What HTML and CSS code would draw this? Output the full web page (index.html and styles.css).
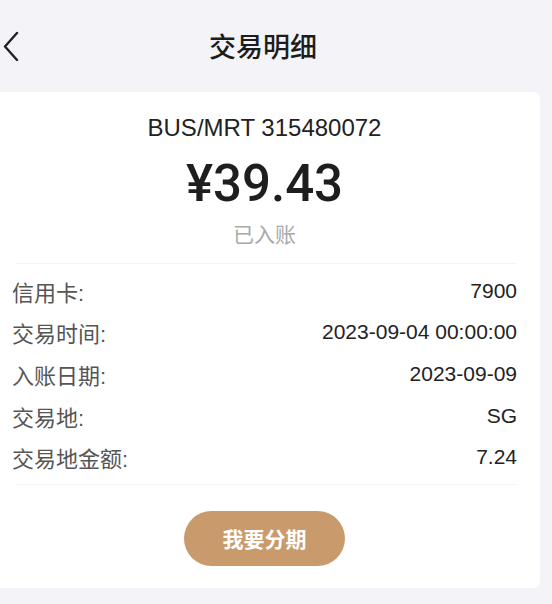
FILE: index.html
```html
<!DOCTYPE html>
<html lang="zh-CN">
<head>
    <meta charset="UTF-8">
    <meta name="viewport" content="width=device-width, initial-scale=1.0">
    <title>交易明细</title>
    <link rel="stylesheet" href="styles.css">
</head>
<body>
    <div class="header">
        <div class="back">
            <svg width="20" height="30" viewBox="0 0 20 30">
                <polyline points="16,2 4,15.5 16,29" fill="none" stroke="#222" stroke-width="2.4" stroke-linecap="round" stroke-linejoin="round"/>
            </svg>
        </div>
        <div class="title">交易明细</div>
        <div class="spacer"></div>
    </div>
    <div class="card">
        <div class="merchant">BUS/MRT 315480072</div>
        <div class="amount">¥39.43</div>
        <div class="status">已入账</div>
        <div class="divider"></div>
        <div class="rows">
            <div class="row"><span class="label">信用卡:</span><span class="value">7900</span></div>
            <div class="row"><span class="label">交易时间:</span><span class="value">2023-09-04 00:00:00</span></div>
            <div class="row"><span class="label">入账日期:</span><span class="value">2023-09-09</span></div>
            <div class="row"><span class="label">交易地:</span><span class="value">SG</span></div>
            <div class="row"><span class="label">交易地金额:</span><span class="value">7.24</span></div>
        </div>
        <div class="divider"></div>
        <div class="actions">
            <button class="btn">我要分期</button>
        </div>
    </div>
</body>
</html>
```

FILE: styles.css
```css
body {
    margin: 0;
    background-color: #f3f3f8;
    font-family: "Liberation Sans", "Noto Sans CJK SC", sans-serif;
    color: #222;
}
.header {
    height: 92px;
    display: flex;
    align-items: center;
    padding-left: 1px;
}
.back {
    width: 23px;
    height: 30px;
    display: flex;
}
.title {
    flex: 1;
    text-align: center;
    font-family: "Noto Sans CJK SC", sans-serif;
    font-size: 27px;
    font-weight: 500;
    color: #1c1c1c;
    line-height: 34px;
}
.spacer {
    width: 50px;
}
.card {
    width: 505px;
    background: #fff;
    border-radius: 0 6px 6px 0;
    padding: 22px 23px 22px 12px;
}
.merchant {
    text-align: center;
    font-size: 24px;
    line-height: 28px;
    color: #222;
}
.amount {
    margin-top: 12px;
    text-align: center;
    font-family: Roboto, "Liberation Sans", sans-serif;
    font-size: 51px;
    line-height: 60px;
    font-weight: 500;
    color: #1e1e1e;
}
.status {
    margin-top: 8px;
    text-align: center;
    font-size: 21px;
    line-height: 26px;
    color: #a9a9a9;
}
.divider {
    height: 1px;
    background: #f3f3f3;
    margin: 15px 0 0 3px;
}
.rows {
    padding: 6px 0 6px;
}
.row {
    display: flex;
    justify-content: space-between;
    align-items: center;
    height: 41.6px;
    font-size: 21px;
}
.label {
    color: #555;
    font-size: 22px;
}
.value {
    color: #222;
}
.rows + .divider {
    margin-top: 0;
}
.actions {
    display: flex;
    justify-content: center;
    margin-top: 26px;
}
.btn {
    width: 161px;
    height: 55px;
    border: none;
    border-radius: 28px;
    background-color: #c99b6c;
    color: #fff;
    font-family: "Noto Sans CJK SC", sans-serif;
    font-size: 21px;
    font-weight: bold;
}
```
